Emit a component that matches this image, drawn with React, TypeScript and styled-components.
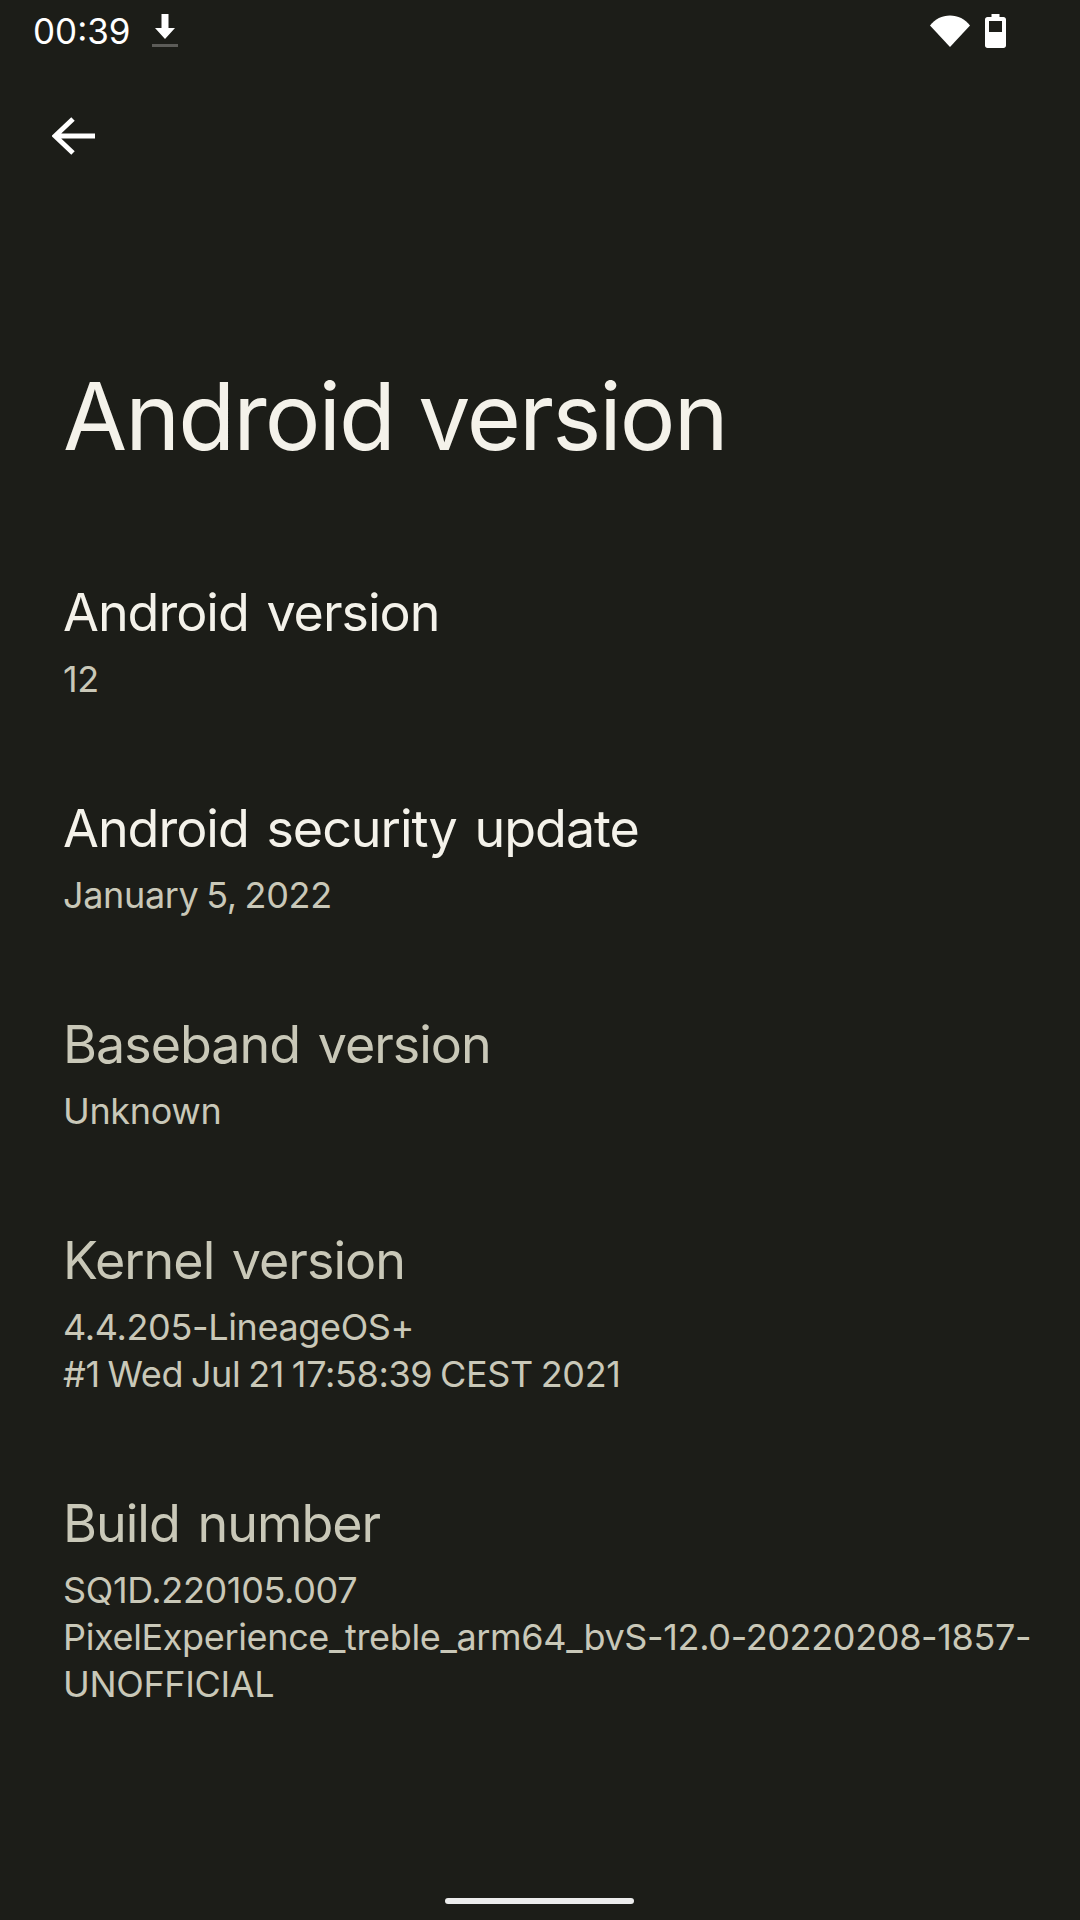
import React from 'react';
import styled, { createGlobalStyle } from 'styled-components';

const GlobalStyle = createGlobalStyle`
  html, body {
    margin: 0;
    padding: 0;
    background: #1c1d18;
  }
`;

const Screen = styled.div`
  width: 1080px;
  height: 1920px;
  display: flex;
  flex-direction: column;
  background: #1c1d18;
  font-family: Inter, 'Liberation Sans', sans-serif;
  overflow: hidden;
`;

const StatusBar = styled.div`
  height: 62px;
  display: flex;
  align-items: center;
  padding: 0 74px 0 33px;
`;

const Time = styled.span`
  font-size: 35px;
  line-height: 62px;
  color: #fff;
`;

const DownloadIcon = styled.svg`
  margin-left: 20px;
`;

const StatusRight = styled.div`
  margin-left: auto;
  display: flex;
  align-items: center;
  gap: 15px;
`;

const BackButton = styled.div`
  height: 36px;
  margin: 54px 0 0 52px;
`;

const PageTitle = styled.h1`
  margin: 209px 0 0 63px;
  font-size: 93px;
  line-height: 110px;
  font-weight: 400;
  letter-spacing: -1.95px;
  color: #f4f2ea;
  white-space: nowrap;
`;

const List = styled.div`
  display: flex;
  flex-direction: column;
  margin-top: 109px;
  padding: 0 30px 0 63px;
`;

const Row = styled.div`
  display: flex;
  flex-direction: column;
  padding: 0 0 ${(p: { $gap: number }) => p.$gap}px;
`;

const RowTitle = styled.div<{ $dim?: boolean }>`
  font-size: 52px;
  line-height: 66px;
  letter-spacing: -1px;
  word-spacing: 4px;
  color: ${(p) => (p.$dim ? '#c9c8b8' : '#f4f2ea')};
  white-space: nowrap;
`;

const RowValue = styled.div`
  font-size: 36px;
  line-height: 47px;
  margin-top: 10px;
  letter-spacing: -0.35px;
  word-spacing: -2px;
  color: #c9c8b8;
  white-space: pre-line;
`;

const HomeBar = styled.div`
  position: absolute;
  left: 445px;
  top: 1898px;
  width: 189px;
  height: 6px;
  border-radius: 3px;
  background: #ececec;
`;

const rows = [
  { title: 'Android version', value: '12', gap: 93 },
  { title: 'Android security update', value: 'January 5, 2022', gap: 93 },
  { title: 'Baseband version', value: 'Unknown', gap: 93, dim: true },
  { title: 'Kernel version', value: '4.4.205-LineageOS+\n#1 Wed Jul 21 17:58:39 CEST 2021', gap: 93, dim: true },
  { title: 'Build number', value: 'SQ1D.220105.007\nPixelExperience_treble_arm64_bvS-12.0-20220208-1857-\nUNOFFICIAL', gap: 0, dim: true },
];

export default function App() {
  return (
    <Screen>
      <GlobalStyle />
      <StatusBar>
        <Time>00:39</Time>
        <DownloadIcon width="28" height="36" viewBox="0 0 28 36">
          <path d="M10.5 1h7v14h6.5L14 26 4 15h6.5z" fill="#fff" />
          <rect x="1" y="31" width="26" height="3" fill="#5c5c58" />
        </DownloadIcon>
        <StatusRight>
          <svg width="40" height="32" viewBox="0 0 40 32">
            <path d="M0 10.500C5 4 12 0.500 20 0.500s15 3.500 20 10L20 32z" fill="#fff" />
          </svg>
          <svg width="21" height="34" viewBox="0 0 21 34">
            <path fillRule="evenodd" d="M6.500 0h8v3h4c1.400 0 2.500 1.100 2.500 2.500V31.500c0 1.400-1.100 2.500-2.500 2.500h-16C1.100 34 0 32.900 0 31.500V5.500C0 4.100 1.100 3 2.500 3h4zM4 7v11h13V7z" fill="#fff" />
          </svg>
        </StatusRight>
      </StatusBar>
      <BackButton>
        <svg width="44" height="40" viewBox="0 0 44 40">
          <path d="M43 20H4M21 3L3 20l18 17" fill="none" stroke="#fff" strokeWidth="5" />
        </svg>
      </BackButton>
      <PageTitle>Android version</PageTitle>
      <List>
        {rows.map((r) => (
          <Row key={r.title} $gap={r.gap}>
            <RowTitle $dim={r.dim}>{r.title}</RowTitle>
            <RowValue>{r.value}</RowValue>
          </Row>
        ))}
      </List>
      <HomeBar />
    </Screen>
  );
}
